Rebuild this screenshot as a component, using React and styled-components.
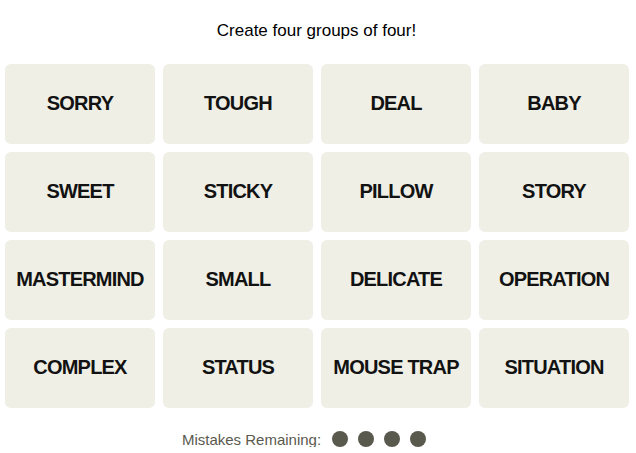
import React from "react";
import styled, { createGlobalStyle } from "styled-components";

const Global = createGlobalStyle`
  html, body { margin: 0; padding: 0; background: #fff; }
  body { font-family: "Liberation Sans", Arial, sans-serif; }
`;

const Page = styled.div`
  width: 636px;
  display: flex;
  flex-direction: column;
  align-items: center;
`;

const Title = styled.p`
  margin: 20px 0 0 -3px;
  font-size: 17px;
  line-height: 22px;
  color: #000;
  font-family: "Liberation Sans", Arial, sans-serif;
`;

const Grid = styled.div`
  margin: 22px 0 0 -2px;
  display: grid;
  grid-template-columns: repeat(4, 150px);
  grid-auto-rows: 80px;
  gap: 8px;
`;

const Tile = styled.button`
  border: none;
  border-radius: 6px;
  background: #efefe6;
  color: #121212;
  font-family: "Liberation Sans", Arial, sans-serif;
  font-weight: 700;
  font-size: 20px;
  letter-spacing: -0.8px;
  text-transform: uppercase;
  display: flex;
  align-items: center;
  justify-content: center;
  padding: 0 0 2px;
  cursor: pointer;
`;

const Mistakes = styled.div`
  margin-top: 23px;
  padding-right: 28px;
  display: flex;
  align-items: center;
  gap: 10px;
  height: 16px;
  font-size: 15px;
  color: #5a594e;
`;

const Label = styled.span`
  margin-right: 1px;
  font-family: "Liberation Sans", Arial, sans-serif;
`;

const Dot = styled.span`
  width: 16px;
  height: 16px;
  border-radius: 50%;
  background: #5a594e;
`;

const words = [
  "SORRY", "TOUGH", "DEAL", "BABY",
  "SWEET", "STICKY", "PILLOW", "STORY",
  "MASTERMIND", "SMALL", "DELICATE", "OPERATION",
  "COMPLEX", "STATUS", "MOUSE TRAP", "SITUATION",
];

export default function App() {
  return (
    <Page>
      <Global />
      <Title>Create four groups of four!</Title>
      <Grid>
        {words.map((w) => (
          <Tile key={w}>{w}</Tile>
        ))}
      </Grid>
      <Mistakes>
        <Label>Mistakes Remaining:</Label>
        <Dot />
        <Dot />
        <Dot />
        <Dot />
      </Mistakes>
    </Page>
  );
}
